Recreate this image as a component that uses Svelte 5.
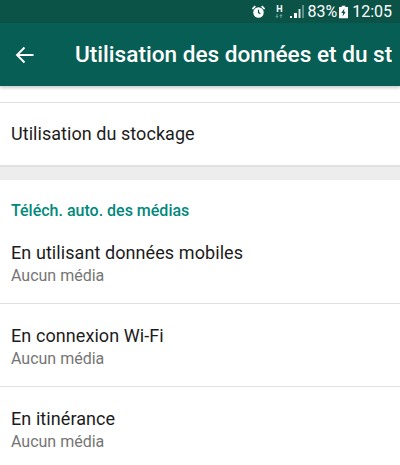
<script>
    const networks = [
        { name: 'En utilisant données mobiles', value: 'Aucun média' },
        { name: 'En connexion Wi-Fi', value: 'Aucun média' },
        { name: 'En itinérance', value: 'Aucun média' }
    ];
</script>

<div class="screen">
    <div class="statusbar">
        <svg class="alarm" width="15" height="15" viewBox="0 0 16 16">
            <circle cx="8" cy="9" r="5.6" fill="#fff" />
            <path d="M8 6v3.2l2 1.2" stroke="#0b5347" stroke-width="1.3" fill="none" />
            <path d="M1 4.6 4 1.6 5.2 3 2 6zM15 4.6 12 1.6 10.8 3 14 6z" fill="#fff" />
        </svg>
        <span class="net">
            <span class="net-h">H</span>
            <svg width="8" height="4" viewBox="0 0 8 4">
                <path d="M2 0v3M0.8 2 2 3.6 3.2 2M6 4V1M4.8 2 6 0.4 7.2 2" stroke="#8fb3ac" stroke-width="0.8" fill="none" />
            </svg>
        </span>
        <svg class="signal" width="14" height="15" viewBox="0 0 14 15">
            <path d="M0 14h2v-2H0z" fill="#fff" />
            <path d="M4 14h3V9H4z" fill="#fff" />
            <path d="M8.5 14h2V5h-2z" fill="#d5e3e0" />
            <path d="M12 14h2V1h-2z" fill="#5f918a" />
        </svg>
        <span class="pct">83%</span>
        <svg class="battery" width="9" height="14" viewBox="0 0 10 14">
            <path d="M3 0h4v1.5h3V14H0V1.5h3z" fill="#fff" />
            <path d="M6 3 2.5 8h2L4 12l3.5-5.2h-2z" fill="#0b5347" />
        </svg>
        <span class="time">12:05</span>
    </div>

    <header class="toolbar">
        <svg class="back" width="20" height="20" viewBox="0 0 20 20">
            <path d="M18.5 10H2.5M9.5 2.5 2 10l7.5 7.5" stroke="#fff" stroke-width="1.9" fill="none" />
        </svg>
        <h1>Utilisation des données et du stockage</h1>
    </header>

    <div class="top-gap"></div>

    <section class="storage">
        <div class="storage-row">Utilisation du stockage</div>
    </section>

    <div class="divider-band"></div>

    <section class="media">
        <h2>Téléch. auto. des médias</h2>
        {#each networks as n, i}
            <div class="row" class:last={i === networks.length - 1}>
                <div class="name">{n.name}</div>
                <div class="value">{n.value}</div>
            </div>
        {/each}
    </section>
</div>

<style>
    :global(body) {
        margin: 0;
        background: #fff;
    }

    .screen {
        width: 400px;
        height: 465px;
        overflow: hidden;
        font-family: Roboto, "Liberation Sans", sans-serif;
        background: #fff;
    }

    .statusbar {
        height: 23px;
        background: #0b5347;
        color: #fff;
        display: flex;
        align-items: center;
        justify-content: flex-end;
        padding-right: 8px;
        box-sizing: border-box;
        font-size: 16px;
    }

    .alarm {
        margin-right: 9px;
    }

    .net {
        display: flex;
        flex-direction: column;
        align-items: center;
        width: 8px;
        margin-right: 7px;
    }

    .net-h {
        font-size: 9px;
        line-height: 9px;
        font-weight: 700;
    }

    .net svg {
        display: block;
    }

    .signal {
        margin-right: 3px;
    }

    .pct {
        margin-right: 2px;
    }

    .battery {
        margin-right: 4px;
    }

    .toolbar {
        height: 63px;
        background: #075e54;
        display: flex;
        align-items: center;
        box-shadow: 0 2px 3px rgba(0, 0, 0, 0.2);
        position: relative;
    }

    .back {
        margin-left: 15px;
        flex: none;
    }

    h1 {
        margin: 0 8px 0 40px;
        font-size: 22.6px;
        font-weight: 500;
        color: #fff;
        white-space: nowrap;
        overflow: hidden;
    }

    .top-gap {
        height: 16px;
        border-bottom: 1px solid #e0e0e0;
    }

    .storage-row {
        height: 62px;
        display: flex;
        align-items: center;
        padding-left: 11px;
        padding-bottom: 1px;
        box-sizing: border-box;
        font-size: 18px;
        letter-spacing: 0.05px;
        color: #1c1c1c;
    }

    .divider-band {
        height: 13px;
        background: #ededed;
        border-top: 2px solid #e0e0e0;
    }

    .media h2 {
        margin: 0;
        padding: 21px 0 1px 11px;
        font-size: 16px;
        line-height: 19px;
        font-weight: 500;
        color: #00897b;
    }

    .row {
        height: 83px;
        box-sizing: border-box;
        padding: 0 0 0 11px;
        border-bottom: 1px solid #e0e0e0;
    }

    .row.last {
        border-bottom: none;
    }

    .name {
        padding-top: 21px;
        font-size: 18px;
        line-height: 21px;
        letter-spacing: 0.08px;
        color: #1c1c1c;
    }

    .value {
        padding-top: 3px;
        font-size: 16px;
        line-height: 19px;
        color: #757575;
    }
</style>
